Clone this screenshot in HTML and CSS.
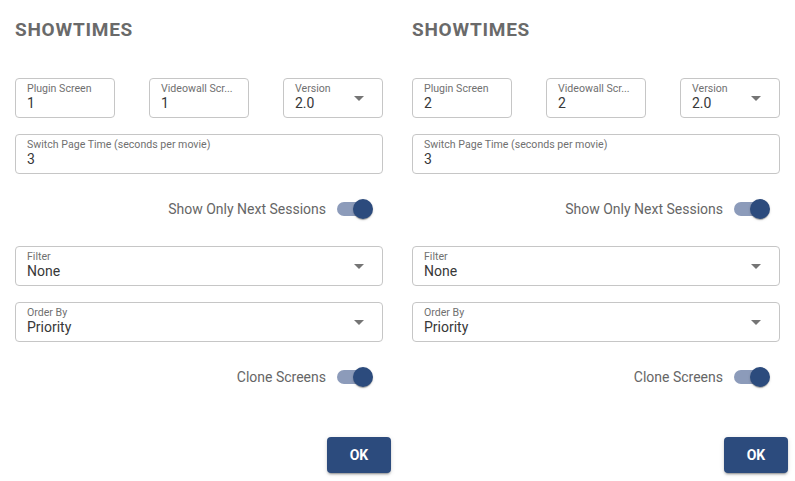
FILE: index.html
```html
<!DOCTYPE html>
<html>
<head>
<meta charset="utf-8">
<link rel="stylesheet" href="styles.css">
</head>
<body>
<div class="page">
  <section class="panel">
    <h2 class="title">SHOWTIMES</h2>
    <div class="row3">
      <div class="field"><span class="label">Plugin Screen</span><span class="value">1</span></div>
      <div class="field"><span class="label">Videowall Scr...</span><span class="value">1</span></div>
      <div class="field select"><span class="label">Version</span><span class="value">2.0</span>
        <svg class="arrow" viewBox="0 0 24 24"><path d="M7 10l5 5 5-5z"/></svg></div>
    </div>
    <div class="field wide"><span class="label">Switch Page Time (seconds per movie)</span><span class="value">3</span></div>
    <div class="toggle-row"><span class="toggle-label">Show Only Next Sessions</span><span class="switch"></span></div>
    <div class="field select wide"><span class="label">Filter</span><span class="value">None</span>
      <svg class="arrow" viewBox="0 0 24 24"><path d="M7 10l5 5 5-5z"/></svg></div>
    <div class="field select wide gap"><span class="label">Order By</span><span class="value">Priority</span>
      <svg class="arrow" viewBox="0 0 24 24"><path d="M7 10l5 5 5-5z"/></svg></div>
    <div class="toggle-row clone"><span class="toggle-label">Clone Screens</span><span class="switch"></span></div>
    <div class="actions"><button class="ok">OK</button></div>
  </section>
  <section class="panel">
    <h2 class="title">SHOWTIMES</h2>
    <div class="row3">
      <div class="field"><span class="label">Plugin Screen</span><span class="value">2</span></div>
      <div class="field"><span class="label">Videowall Scr...</span><span class="value">2</span></div>
      <div class="field select"><span class="label">Version</span><span class="value">2.0</span>
        <svg class="arrow" viewBox="0 0 24 24"><path d="M7 10l5 5 5-5z"/></svg></div>
    </div>
    <div class="field wide"><span class="label">Switch Page Time (seconds per movie)</span><span class="value">3</span></div>
    <div class="toggle-row"><span class="toggle-label">Show Only Next Sessions</span><span class="switch"></span></div>
    <div class="field select wide"><span class="label">Filter</span><span class="value">None</span>
      <svg class="arrow" viewBox="0 0 24 24"><path d="M7 10l5 5 5-5z"/></svg></div>
    <div class="field select wide gap"><span class="label">Order By</span><span class="value">Priority</span>
      <svg class="arrow" viewBox="0 0 24 24"><path d="M7 10l5 5 5-5z"/></svg></div>
    <div class="toggle-row clone"><span class="toggle-label">Clone Screens</span><span class="switch"></span></div>
    <div class="actions"><button class="ok">OK</button></div>
  </section>
</div>
</body>
</html>
```
FILE: styles.css
```css
* { box-sizing: border-box; }
html, body { margin: 0; padding: 0; background: #fff; }
body { font-family: Roboto, "Liberation Sans", sans-serif; }
.page { display: flex; width: 795px; height: 481px; }
.panel { width: 397px; padding: 19px 14px 0 15px; display: flex; flex-direction: column; }
.title { margin: 0; font-size: 19px; line-height: 22px; font-weight: 700; color: #6a6a6a; letter-spacing: 0.75px; }
.row3 { display: flex; justify-content: space-between; margin-top: 37px; }
.field { position: relative; width: 100px; height: 40px; border: 1px solid #c6c6c6; border-radius: 4px; padding: 3px 8px 0 11px; display: flex; flex-direction: column; }
.field.wide { width: 368px; margin-top: 16px; }
.label { font-size: 10.6px; line-height: 13px; color: #707070; white-space: nowrap; }
.value { font-size: 14px; line-height: 16px; color: #383838; }
.arrow { position: absolute; right: 11px; top: 7px; width: 24px; height: 24px; fill: #757575; }
.toggle-row { display: flex; justify-content: flex-end; align-items: center; height: 38px; margin: 16px 0 2px; padding-right: 12px; }
.toggle-row.clone { margin: 16px 0 0; }
.field.gap { margin-top: 16px; }
.toggle-label { font-size: 14px; color: #666; margin-right: 11px; }
.switch { position: relative; width: 34px; height: 14px; border-radius: 7px; background: #8c9bba; }
.switch::after { content: ""; position: absolute; right: -2px; top: -3px; width: 20px; height: 20px; border-radius: 50%; background: #2c4b7d; box-shadow: 0 2px 1px -1px rgba(0,0,0,.2), 0 1px 1px 0 rgba(0,0,0,.14), 0 1px 3px 0 rgba(0,0,0,.12); }
.actions { display: flex; justify-content: flex-end; margin-top: 41px; margin-right: -8px; }
.ok { width: 64px; height: 36px; border: 0; border-radius: 4px; background: #2c4b7d; color: #fff; font-family: Roboto, "Liberation Sans", sans-serif; font-size: 14px; font-weight: 700; box-shadow: 0 3px 1px -2px rgba(0,0,0,.2), 0 2px 2px 0 rgba(0,0,0,.14), 0 1px 5px 0 rgba(0,0,0,.12); }
```
